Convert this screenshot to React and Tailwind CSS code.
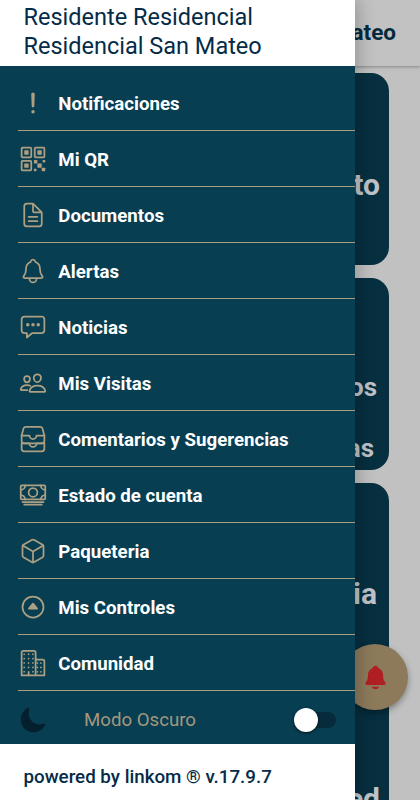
import {
  IoAlertOutline, IoQrCodeOutline, IoDocumentTextOutline, IoNotificationsOutline,
  IoChatboxEllipsesOutline, IoPeopleOutline, IoFileTrayStackedOutline, IoCashOutline,
  IoCubeOutline, IoCaretUpCircleOutline, IoBusinessOutline, IoMoon, IoNotifications,
} from 'react-icons/io5';

const items = [
  [IoAlertOutline, 'Notificaciones'],
  [IoQrCodeOutline, 'Mi QR'],
  [IoDocumentTextOutline, 'Documentos'],
  [IoNotificationsOutline, 'Alertas'],
  [IoChatboxEllipsesOutline, 'Noticias'],
  [IoPeopleOutline, 'Mis Visitas'],
  [IoFileTrayStackedOutline, 'Comentarios y Sugerencias'],
  [IoCashOutline, 'Estado de cuenta'],
  [IoCubeOutline, 'Paqueteria'],
  [IoCaretUpCircleOutline, 'Mis Controles'],
  [IoBusinessOutline, 'Comunidad'],
];

function Page() {
  return (
    <div className="flex h-full flex-col bg-[#c1c1c1]">
      <header className="flex h-[66px] shrink-0 items-center justify-end bg-[#c2c2c2] pr-6 text-[22.5px] font-bold text-[#042b3d] shadow-[0_1px_3px_rgba(0,0,0,0.3)]">
        Mateo
      </header>
      <main className="flex flex-col gap-[13px] pl-[31px] pr-[31px] pt-[7px] text-right text-[30px] font-bold leading-[60px] text-[#bfc3c7]">
        <section className="h-[192px] shrink-0 rounded-[18px] bg-[#062f40] pr-[9px] pt-[82px]">to</section>
        <section className="h-[192px] shrink-0 rounded-[18px] bg-[#062f40] pt-[79px] text-[26px]">
          <p className="pr-[12px]">os</p>
          <p className="pr-[15px] pt-px">as</p>
        </section>
        <section className="h-[400px] shrink-0 rounded-[18px] bg-[#062f40] pt-[81px]">
          <p className="pr-[12px]">ia</p>
          <p className="pr-[9px] pt-[145px]">ed</p>
        </section>
      </main>
    </div>
  );
}

function Drawer() {
  return (
    <aside className="absolute inset-y-0 left-0 flex w-[355px] flex-col bg-white shadow-[4px_0_16px_rgba(0,0,0,0.22)]">
      <header className="h-[66px] shrink-0 pl-[23.5px] pt-[3px] text-[23.5px] leading-[29px] text-[#042b48]">
        <p>Residente Residencial</p>
        <p>Residencial San Mateo</p>
      </header>
      <nav className="flex h-[678px] shrink-0 flex-col bg-[#083e52] pl-[18px] pt-[9px]">
        {items.map(([Icon, label]) => (
          <div key={label} className="flex h-14 shrink-0 items-center border-b border-[#a99d80] pl-px">
            <Icon className="size-7 text-[#ada082]" />
            <span className="pl-[11.3px] pt-0.5 text-[18.67px] font-bold text-white">{label}</span>
          </div>
        ))}
        <div className="flex h-14 shrink-0 items-center pl-px pt-px">
          <IoMoon className="size-7 text-[#04202f]" />
          <span className="pl-[37px] text-[18.67px] text-[#a3977c]">Modo Oscuro</span>
          <div className="ml-auto mr-[19px] flex h-4 w-[42px] items-center rounded-full bg-[#062c3c]">
            <div className="size-6 shrink-0 rounded-full bg-white shadow-[0_1px_3px_rgba(0,0,0,0.7)]" />
          </div>
        </div>
      </nav>
      <footer className="pl-[23.5px] pt-[19px] text-[18.75px] font-medium leading-7 text-[#042b48]">powered by linkom ® v.17.9.7</footer>
    </aside>
  );
}

export default function App() {
  return (
    <div className="relative h-[800px] w-[420px] overflow-hidden font-[Roboto,sans-serif]">
      <Page />
      <button className="absolute left-[342px] top-[644px] flex size-[66px] items-center justify-center rounded-full bg-[#8c7a5b] pl-px text-[#b02023] shadow-[0_3px_6px_rgba(0,0,0,0.35)]">
        <IoNotifications className="size-[27px]" />
      </button>
      <Drawer />
    </div>
  );
}
